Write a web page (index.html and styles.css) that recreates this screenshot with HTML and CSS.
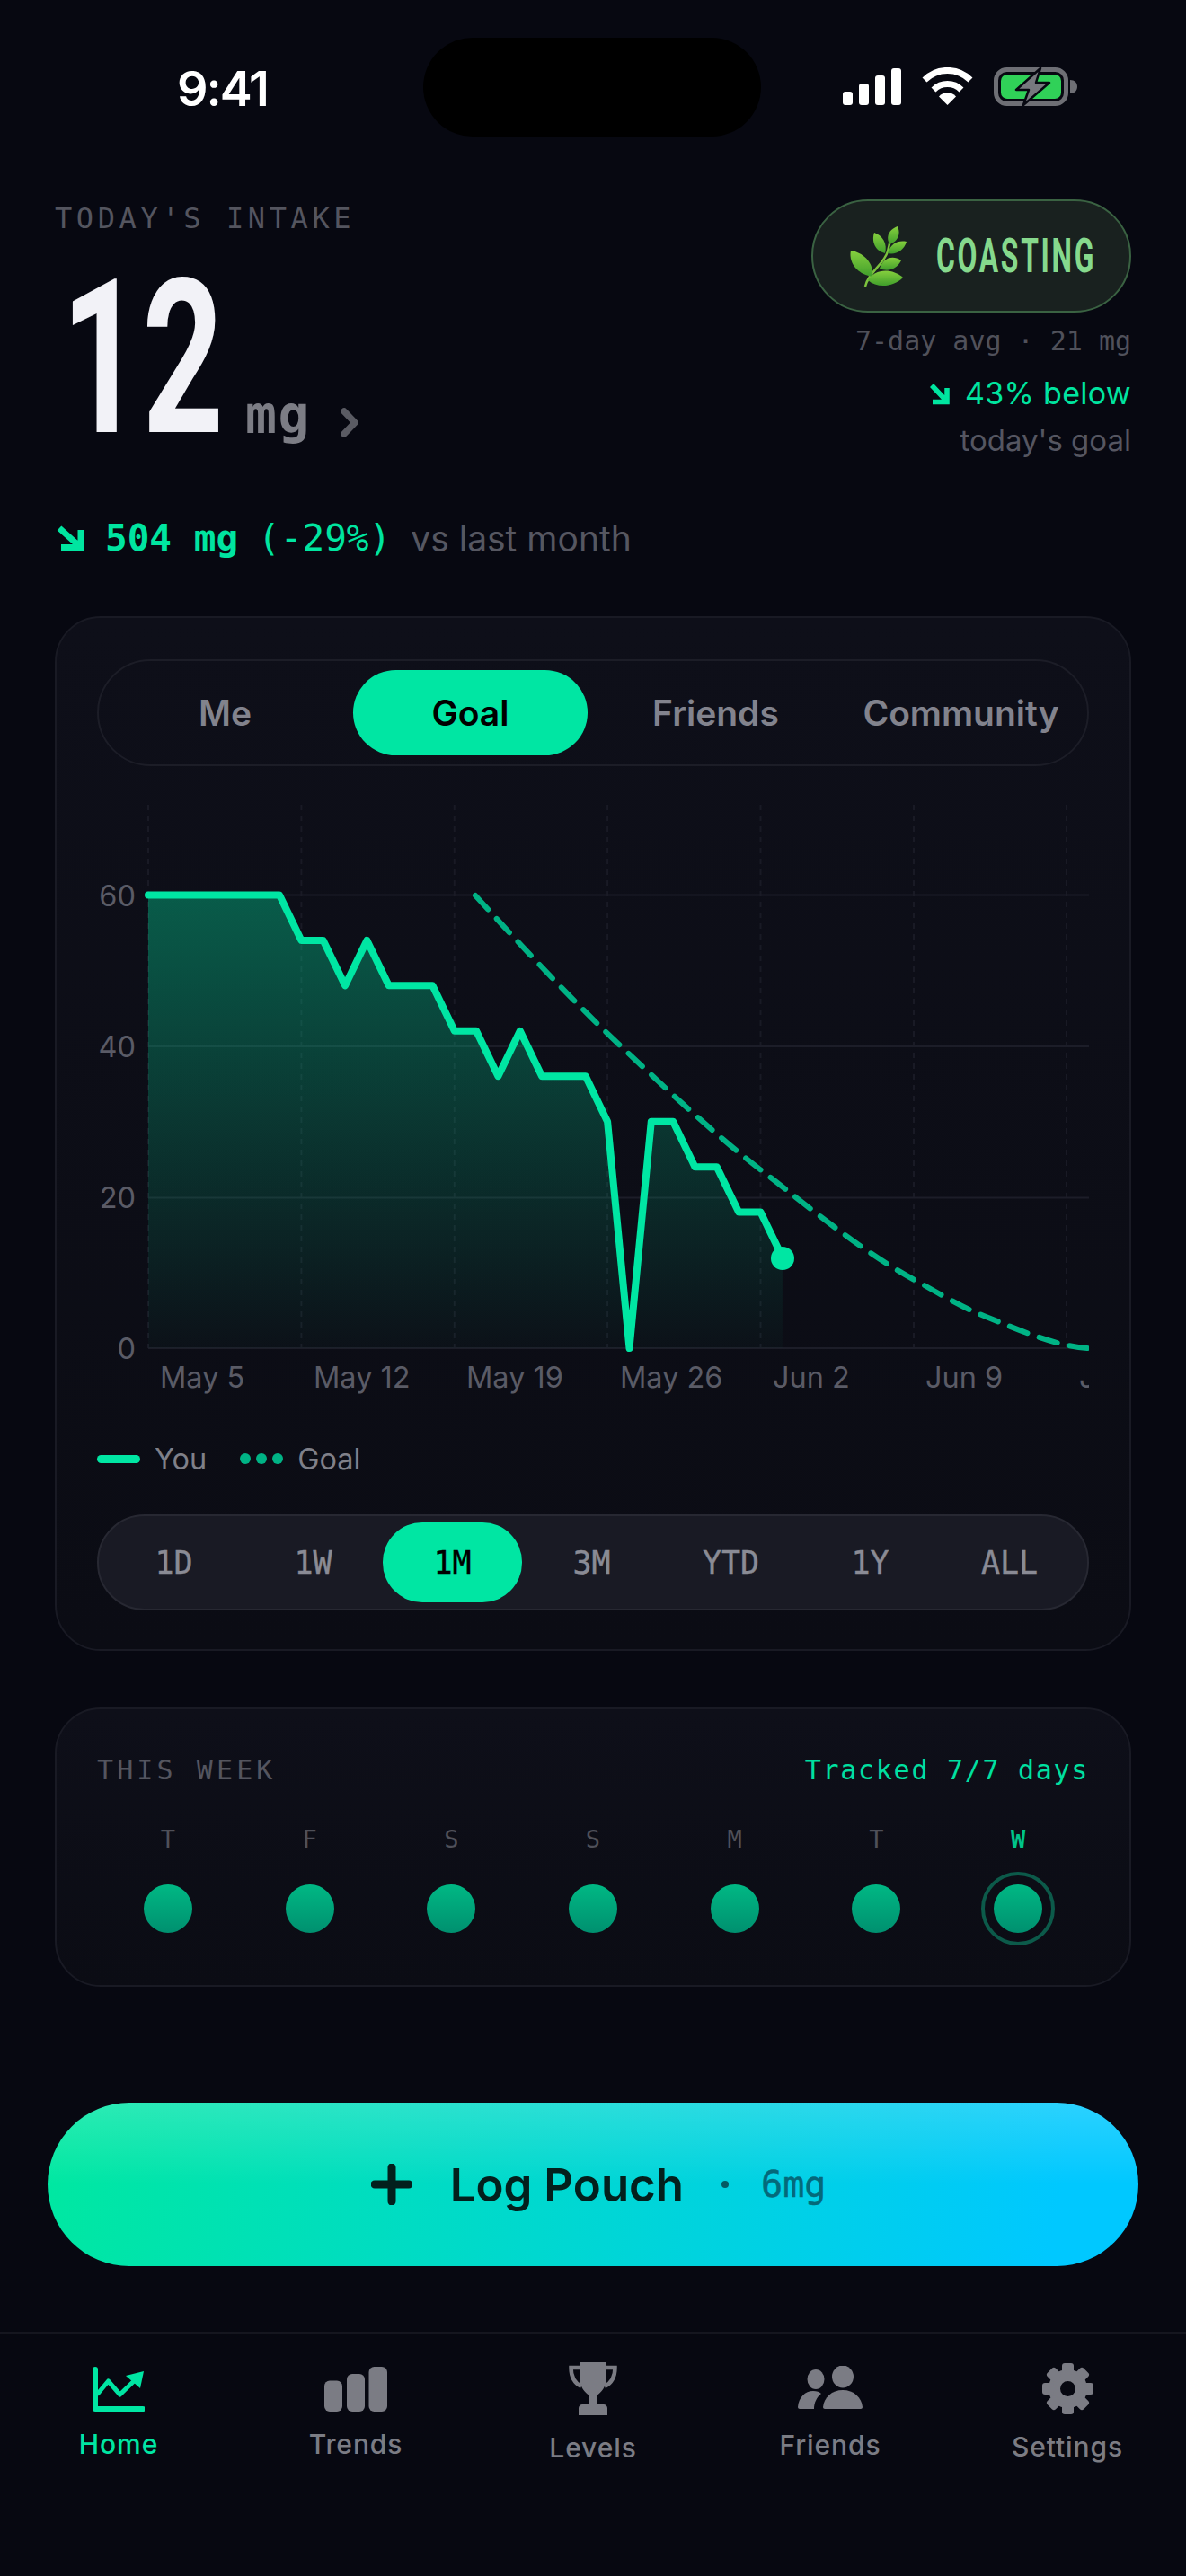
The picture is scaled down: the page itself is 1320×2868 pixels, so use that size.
FILE: index.html
```html
<!DOCTYPE html>
<html lang="en">
<head>
  <meta charset="UTF-8">
  <title>Home</title>
  <link rel="stylesheet" href="styles.css">
</head>
<body>
  <div class="screen">
    <div class="status-bar">
      <div class="status-time">9:41</div>
      <div class="island"></div>
      <div class="status-icons">
        <svg width="65" height="41" viewBox="0 0 65 41"><rect x="0" y="26" width="11" height="15" rx="3" fill="#fff"/><rect x="18" y="17" width="11" height="24" rx="3" fill="#fff"/><rect x="36" y="8" width="11" height="33" rx="3" fill="#fff"/><rect x="54" y="0" width="11" height="41" rx="3" fill="#fff"/></svg>
        <svg width="57" height="42" viewBox="0 0 57 42"><path d="M3 14A36 36 0 0 1 54 14" fill="none" stroke="#fff" stroke-width="7"/><path d="M13 25A22 22 0 0 1 44 25" fill="none" stroke="#fff" stroke-width="7"/><path d="M28.500 42L19 32.500A13 13 0 0 1 38 32.500Z" fill="#fff"/></svg>
        <svg width="93" height="43" viewBox="0 0 93 43"><rect x="2.500" y="2.500" width="78" height="38" rx="12" fill="none" stroke="#6e6f75" stroke-width="5"/><rect x="8" y="8" width="67" height="27" rx="7" fill="#30d158"/><path d="M85 14c5 0 8 3 8 7.500s-3 7.500-8 7.500z" fill="#6e6f75"/><path d="M52 1L25 25H39L33 42L62 17H47Z" fill="#77787e" stroke="#070811" stroke-width="2.500" stroke-linejoin="round"/></svg>
      </div>
    </div>

    <header class="hero">
      <div class="hero-left">
        <div class="intake-label">TODAY'S INTAKE</div>
        <div class="intake-row">
          <span class="intake-num">12</span>
          <span class="intake-unit">mg</span>
          <svg class="intake-chevron" width="20" height="33" viewBox="0 0 20 33"><path d="M4 4L16 16.500L4 29" fill="none" stroke="#5a5b63" stroke-width="7.500" stroke-linecap="round" stroke-linejoin="round"/></svg>
        </div>
      </div>
      <div class="hero-right">
        <div class="badge">
          <svg width="64" height="67" viewBox="0 0 64 67">
            <defs>
              <linearGradient id="leaf" x1="0" y1="0" x2="0" y2="1"><stop offset="0" stop-color="#86cf3e"/><stop offset="1" stop-color="#3f9e2b"/></linearGradient>
            </defs>
            <path d="M17 67C20 52 38 42 42 28C44 20 45 15 46 10" fill="none" stroke="#7cc23e" stroke-width="2.500"/>
            <path d="M44 20C39 10 45 3 53 0C57 9 53 17 44 20Z" fill="url(#leaf)"/>
            <path d="M42 30C45 19 54 15 63 17C60 27 51 32 42 30Z" fill="url(#leaf)"/>
            <path d="M39 30C27 27 24 16 27 7C36 10 42 19 39 30Z" fill="url(#leaf)"/>
            <path d="M25 56C9 54-2 41 1 27C15 29 27 41 25 56Z" fill="url(#leaf)"/>
            <path d="M33 47C36 36 47 31 57 38C52 48 42 51 33 47Z" fill="url(#leaf)"/>
            <path d="M20 60C27 47 47 46 59 57C48 68 30 69 20 60Z" fill="url(#leaf)"/>
          </svg>
          <span class="badge-text">COASTING</span>
        </div>
        <div class="avg-line">7-day avg · 21 mg</div>
        <div class="below-line">
          <svg width="24" height="25" viewBox="0 0 24 25"><path d="M3 3L20 21M20 6V21.500H4" fill="none" stroke="#00e5a0" stroke-width="5.500"/></svg>
          <span>43% below</span>
        </div>
        <div class="goal-line">today's goal</div>
      </div>
    </header>

    <div class="delta">
      <svg width="31" height="28" viewBox="0 0 31 28"><path d="M3 3L27 24.500M27 5V24.500H5" fill="none" stroke="#00e5a0" stroke-width="7"/></svg>
      <span class="delta-amount">504 mg</span>
      <span class="delta-pct">(-29%)</span>
      <span class="delta-note">vs last month</span>
    </div>

    <section class="card chart-card">
      <div class="compare-tabs">
        <div class="compare-tab">Me</div>
        <div class="compare-tab active">Goal</div>
        <div class="compare-tab">Friends</div>
        <div class="compare-tab">Community</div>
      </div>

      <svg class="chart" width="1104" height="680" viewBox="108 880 1104 680">
        <defs>
          <linearGradient id="area" x1="0" y1="996" x2="0" y2="1501" gradientUnits="userSpaceOnUse">
            <stop offset="0" stop-color="#00e6a3" stop-opacity=".36"/>
            <stop offset="1" stop-color="#00e6a3" stop-opacity=".02"/>
          </linearGradient>
        </defs>
        <g class="grid-v">
          <path d="M165 896V1501M335.400 896V1501M505.800 896V1501M676.100 896V1501M846.500 896V1501M1017 896V1501M1187 896V1501"/>
        </g>
        <g class="grid-h">
          <path d="M165 996.500H1212M165 1165H1212M165 1333.500H1212M165 1501H1212"/>
        </g>
        <path d="M165 1501V996.400H311L335.400 1046.900H359.700L384.100 1097.300L408.400 1046.900L432.700 1097.300H481.400L505.800 1147.800H530.100L554.400 1198.200L578.800 1147.800L603.100 1198.200H651.800L676.100 1248.700L700.500 1501L724.800 1248.700H749.200L773.500 1299.200H797.800L822.200 1349.600H846.500L870.900 1400.100V1501Z" fill="url(#area)"/>
        <path class="goal-line-path" d="M529 997C582 1055 635 1112 688 1162C741 1212 793 1261 846 1302C903 1346 959 1393 1016 1424C1042 1438 1069 1455 1095 1465C1133 1480 1172 1498 1210 1501"/>
        <path class="you-line" d="M165 996.400H311L335.400 1046.900H359.700L384.100 1097.300L408.400 1046.900L432.700 1097.300H481.400L505.800 1147.800H530.100L554.400 1198.200L578.800 1147.800L603.100 1198.200H651.800L676.100 1248.700L700.500 1501L724.800 1248.700H749.200L773.500 1299.200H797.800L822.200 1349.600H846.500L870.900 1400.100"/>
        <circle cx="871" cy="1401" r="13" fill="#00e6a3"/>
        <g class="axis-y">
          <text x="151" y="1009">60</text>
          <text x="151" y="1177">40</text>
          <text x="151" y="1345">20</text>
          <text x="151" y="1513">0</text>
        </g>
        <g class="axis-x">
          <text x="178" y="1545">May 5</text>
          <text x="349" y="1545">May 12</text>
          <text x="519" y="1545">May 19</text>
          <text x="690" y="1545">May 26</text>
          <text x="860" y="1545">Jun 2</text>
          <text x="1030" y="1545">Jun 9</text>
          <text x="1201" y="1545">J</text>
        </g>
      </svg>

      <div class="legend">
        <span class="legend-you"></span>
        <span class="legend-label">You</span>
        <span class="legend-dots"><i></i><i></i><i></i></span>
        <span class="legend-label">Goal</span>
      </div>

      <div class="ranges">
        <div class="range">1D</div>
        <div class="range">1W</div>
        <div class="range active">1M</div>
        <div class="range">3M</div>
        <div class="range">YTD</div>
        <div class="range">1Y</div>
        <div class="range">ALL</div>
      </div>
    </section>

    <section class="card week-card">
      <div class="week-head">
        <span class="week-title">THIS WEEK</span>
        <span class="week-tracked">Tracked 7/7 days</span>
      </div>
      <div class="week-days">
        <div class="day"><span class="day-name">T</span><span class="day-dot"></span></div>
        <div class="day"><span class="day-name">F</span><span class="day-dot"></span></div>
        <div class="day"><span class="day-name">S</span><span class="day-dot"></span></div>
        <div class="day"><span class="day-name">S</span><span class="day-dot"></span></div>
        <div class="day"><span class="day-name">M</span><span class="day-dot"></span></div>
        <div class="day"><span class="day-name">T</span><span class="day-dot"></span></div>
        <div class="day today"><span class="day-name">W</span><span class="day-dot"></span></div>
      </div>
    </section>

    <button class="log-btn" type="button">
      <svg width="46" height="46" viewBox="0 0 46 46"><path d="M23 4V42M4 23H42" fill="none" stroke="#03201d" stroke-width="9" stroke-linecap="round"/></svg>
      <span class="log-title">Log Pouch</span>
      <span class="log-sep"></span>
      <span class="log-dose">6mg</span>
    </button>

    <nav class="tabbar">
      <div class="tab active">
        <svg width="58" height="50" viewBox="0 0 58 50" fill="#00e6a3"><path d="M3 3V47H56" fill="none" stroke="#00e6a3" stroke-width="6" stroke-linecap="round" stroke-linejoin="round"/><path d="M5 31L17.500 16L30.500 31L46 16" fill="none" stroke="#00e6a3" stroke-width="5" stroke-linejoin="round"/><path d="M37 10L57 5L53 24Z"/></svg>
        <span>Home</span>
      </div>
      <div class="tab">
        <svg width="70" height="50" viewBox="0 0 70 50" fill="#7b7c84"><rect x="0" y="15.500" width="20" height="34.500" rx="6"/><rect x="25" y="8" width="20" height="42" rx="6"/><rect x="49.500" y="0" width="20.500" height="50" rx="6"/></svg>
        <span>Trends</span>
      </div>
      <div class="tab">
        <svg width="54" height="59" viewBox="0 0 54 59" fill="#7b7c84"><path d="M12 0H42V17C42 27 36 34 31 37V47H39C41 47 43 49 43 51V59H11V51C11 49 13 47 15 47H23V37C18 34 12 27 12 17Z"/><path d="M12 6H2.500C2.500 16 6 23 14 27M42 6H51.500C51.500 16 48 23 40 27" fill="none" stroke="#7b7c84" stroke-width="4.500"/></svg>
        <span>Levels</span>
      </div>
      <div class="tab">
        <svg width="72" height="52" viewBox="0 0 72 52" fill="#7b7c84"><ellipse cx="20" cy="15" rx="9.500" ry="11"/><ellipse cx="50" cy="12" rx="12" ry="12.500"/><path d="M0 46C1 35 8 28 17 28C21 28 24 29 26 31C21 35 18 41 18 48H2C1 48 0 47 0 46Z"/><path d="M28 46C29 35 38 27 50 27C62 27 71 35 72 46C72 47 71 48 70 48H30C29 48 28 47 28 46Z"/></svg>
        <span>Friends</span>
      </div>
      <div class="tab">
        <svg width="57" height="57" viewBox="0 0 57 57" fill="#7b7c84">
          <circle cx="28.500" cy="28.500" r="15" fill="none" stroke="#7b7c84" stroke-width="13"/>
          <rect x="22" y="0" width="13" height="13" rx="3"/>
          <rect x="22" y="0" width="13" height="13" rx="3" transform="rotate(45 28.500 28.500)"/>
          <rect x="22" y="0" width="13" height="13" rx="3" transform="rotate(90 28.500 28.500)"/>
          <rect x="22" y="0" width="13" height="13" rx="3" transform="rotate(135 28.500 28.500)"/>
          <rect x="22" y="0" width="13" height="13" rx="3" transform="rotate(180 28.500 28.500)"/>
          <rect x="22" y="0" width="13" height="13" rx="3" transform="rotate(225 28.500 28.500)"/>
          <rect x="22" y="0" width="13" height="13" rx="3" transform="rotate(270 28.500 28.500)"/>
          <rect x="22" y="0" width="13" height="13" rx="3" transform="rotate(315 28.500 28.500)"/>
        </svg>
        <span>Settings</span>
      </div>
    </nav>
  </div>
</body>
</html>
```

FILE: styles.css
```css
* {
  box-sizing: border-box;
}

html, body {
  margin: 0;
  padding: 0;
  background: #070811;
}

body {
  font-family: Inter, "Liberation Sans", sans-serif;
  color: #fff;
}

.screen {
  width: 1320px;
  height: 2868px;
  overflow: hidden;
  display: flex;
  flex-direction: column;
}

/* status bar */
.status-bar {
  display: flex;
  align-items: center;
  height: 110px;
  margin-top: 42px;
}

.status-time {
  width: 471px;
  padding-left: 24px;
  text-align: center;
  font-size: 54px;
  font-weight: 600;
  letter-spacing: -2px;
  line-height: 110px;
  margin-top: 3px;
}

.island {
  width: 376px;
  height: 110px;
  background: #000;
  border-radius: 55px;
}

.status-icons {
  display: flex;
  align-items: center;
  gap: 23px;
  padding-left: 91px;
  margin-top: -2px;
}

/* hero */
.hero {
  display: flex;
  justify-content: space-between;
  padding: 0 61px;
  margin-top: 70px;
  height: 326px;
}

.intake-label {
  font-family: "DejaVu Sans Mono", monospace;
  font-size: 32px;
  line-height: 40px;
  letter-spacing: 4.600px;
  color: #54555f;
  margin-top: 1px;
}

.intake-row {
  display: flex;
  align-items: flex-end;
  margin-top: 51px;
  height: 170px;
}

.intake-num {
  display: inline-block;
  width: 205px;
  margin-left: 7px;
  font-family: Roboto, sans-serif;
  font-weight: 700;
  font-size: 239px;
  line-height: 170px;
  height: 170px;
  color: #f2f2f7;
  transform: scaleX(.66);
  transform-origin: left center;
  white-space: nowrap;
}

.intake-unit {
  font-family: "DejaVu Sans Mono", monospace;
  font-weight: 700;
  font-size: 58px;
  line-height: 56px;
  color: #7c7d85;
  margin-bottom: -6px;
  letter-spacing: 1.500px;
}

.intake-chevron {
  margin-left: 33px;
  margin-bottom: -3px;
}

.hero-right {
  display: flex;
  flex-direction: column;
  align-items: flex-end;
}

.badge {
  display: flex;
  align-items: center;
  width: 356px;
  height: 126px;
  padding-left: 41px;
  gap: 32px;
  background: #19211f;
  border: 2px solid #3a6242;
  border-radius: 63px;
}

.badge-text {
  display: inline-block;
  width: 177px;
  font-family: Roboto, sans-serif;
  font-weight: 700;
  font-size: 53px;
  letter-spacing: 4.500px;
  color: #86d98d;
  transform: scaleX(.6);
  transform-origin: left center;
  white-space: nowrap;
}

.avg-line {
  font-family: "DejaVu Sans Mono", monospace;
  font-size: 30px;
  line-height: 40px;
  color: #50515b;
  margin-top: 12px;
}

.below-line {
  display: flex;
  align-items: center;
  gap: 16px;
  font-size: 34px;
  letter-spacing: .3px;
  line-height: 44px;
  color: #00e5a0;
  margin-top: 16px;
}

.goal-line {
  font-size: 33px;
  line-height: 44px;
  color: #555661;
  margin-top: 8px;
}

/* vs last month */
.delta {
  display: flex;
  align-items: center;
  padding-left: 63px;
  height: 50px;
  margin-top: 26px;
  margin-bottom: 1px;
  font-family: "DejaVu Sans Mono", monospace;
  font-size: 41px;
  color: #00e5a0;
}

.delta-amount {
  font-weight: 700;
  margin-left: 23px;
}

.delta-pct {
  margin-left: 22px;
}

.delta-note {
  font-family: Inter, sans-serif;
  font-size: 39px;
  color: #565761;
  margin-left: 22px;
}

/* cards */
.card {
  margin: 0 61px;
  border: 2px solid #191a24;
  border-radius: 51px;
  background: linear-gradient(180deg, #0e0f19, #0b0c14);
}

.chart-card {
  height: 1152px;
  margin-top: 61px;
  padding: 46px 45px 0;
}

.compare-tabs {
  display: grid;
  grid-template-columns: repeat(4, 273px);
  height: 119px;
  padding: 10px 4px;
  border: 2px solid #1c1d27;
  border-radius: 60px;
}

.compare-tab {
  display: flex;
  align-items: center;
  justify-content: center;
  font-size: 39px;
  font-weight: 600;
  color: #82838d;
  border-radius: 48px;
}

.compare-tab.active {
  margin: 0 6px;
  background: #00e6a3;
  color: #000;
}

.chart {
  display: block;
  margin-top: 27px;
}

.grid-v path {
  fill: none;
  stroke: #191a25;
  stroke-width: 2;
  stroke-dasharray: 6 6;
}

.grid-h path {
  fill: none;
  stroke: #1c1d28;
  stroke-width: 2;
}

.you-line {
  fill: none;
  stroke: #00e6a3;
  stroke-width: 8;
  stroke-linecap: round;
  stroke-linejoin: round;
}

.goal-line-path {
  fill: none;
  stroke: #00b385;
  stroke-width: 6;
  stroke-linecap: round;
  stroke-dasharray: 21 14;
}

.axis-y text,
.axis-x text {
  font-family: Inter, sans-serif;
  font-size: 32.500px;
  fill: #5a5b66;
}

.axis-y text {
  text-anchor: end;
}

.legend {
  display: flex;
  align-items: center;
  height: 40px;
  margin-top: 44px;
}

.legend-you {
  width: 48px;
  height: 9px;
  border-radius: 5px;
  background: #00e6a3;
}

.legend-label {
  font-size: 32.500px;
  color: #7f8089;
  margin-left: 16px;
}

.legend-dots {
  display: flex;
  gap: 6px;
  margin-left: 37px;
}

.legend-dots i {
  width: 12px;
  height: 12px;
  border-radius: 50%;
  background: #00b385;
}

.ranges {
  display: grid;
  grid-template-columns: repeat(7, 155px);
  height: 107px;
  margin-top: 42px;
  padding: 7px 6px;
  background: #191a24;
  border: 2px solid #272832;
  border-radius: 53px;
}

.range {
  display: flex;
  align-items: center;
  justify-content: center;
  font-family: "DejaVu Sans Mono", monospace;
  font-size: 35px;
  -webkit-text-stroke: .4px currentColor;
  color: #8a8b95;
  border-radius: 44px;
}

.range.active {
  background: #00e6a3;
  color: #000;
}

/* this week */
.week-card {
  height: 311px;
  margin-top: 63px;
  padding: 47px 45px 0;
}

.week-head {
  display: flex;
  justify-content: space-between;
  align-items: center;
  height: 40px;
  font-family: "DejaVu Sans Mono", monospace;
  font-size: 30px;
}

.week-title {
  letter-spacing: 4.100px;
  color: #54555f;
}

.week-tracked {
  letter-spacing: 1.700px;
  color: #00e0a0;
}

.week-days {
  display: grid;
  grid-template-columns: repeat(7, 1fr);
  margin-top: 42px;
}

.day {
  display: flex;
  flex-direction: column;
  align-items: center;
  gap: 34px;
}

.day-name {
  font-family: "DejaVu Sans Mono", monospace;
  font-size: 27px;
  line-height: 32px;
  color: #4f5059;
}

.day-dot {
  position: relative;
  width: 54px;
  height: 54px;
  border-radius: 50%;
  background: linear-gradient(180deg, #00b884, #00906f);
}

.today .day-name {
  font-weight: 700;
  color: #00c48a;
}

.today .day-dot::after {
  content: "";
  box-sizing: border-box;
  position: absolute;
  left: -14px;
  top: -14px;
  width: 82px;
  height: 82px;
  border: 4px solid #0c5a4a;
  border-radius: 50%;
}

/* log button */
.log-btn {
  display: flex;
  align-items: center;
  justify-content: center;
  width: 1214px;
  height: 182px;
  margin: 129px 0 0 53px;
  padding: 0 0 0 12px;
  border: 0;
  border-radius: 91px;
  background:
    linear-gradient(180deg, rgba(255, 255, 255, .17), rgba(255, 255, 255, 0) 50%),
    linear-gradient(100deg, #00e8a0, #00c8ff 92%);
  color: #03201d;
  font-family: Inter, sans-serif;
}

.log-title {
  margin-left: 42px;
  font-size: 51px;
  font-weight: 600;
}

.log-sep {
  width: 8px;
  height: 8px;
  margin-left: 42px;
  border-radius: 50%;
  background: #045a63;
}

.log-dose {
  margin-left: 36px;
  font-family: "DejaVu Sans Mono", monospace;
  font-size: 40px;
  -webkit-text-stroke: .5px currentColor;
  color: #04697a;
}

/* tab bar */
.tabbar {
  display: grid;
  grid-template-columns: repeat(5, 264px);
  align-items: center;
  height: 178px;
  margin-top: 73px;
  border-top: 3px solid #15161f;
}

.tab {
  display: flex;
  flex-direction: column;
  align-items: center;
  gap: 18px;
  font-size: 30px;
  line-height: 36px;
  font-weight: 500;
  letter-spacing: .9px;
  color: #7b7c84;
}

.tab.active {
  color: #00e6a3;
}
```
